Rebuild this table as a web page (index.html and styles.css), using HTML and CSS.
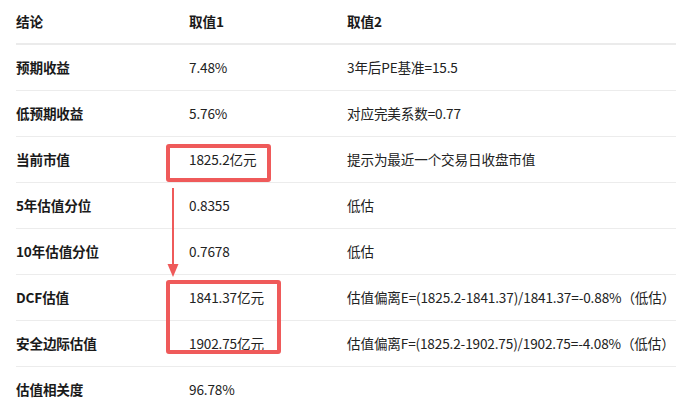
FILE: index.html
```html
<!DOCTYPE html>
<html lang="zh-CN">
<head>
<meta charset="utf-8">
<link rel="stylesheet" href="styles.css">
</head>
<body>
<div class="page">
  <div class="table">
    <div class="row head"><div class="c1">结论</div><div class="c2">取值1</div><div class="c3">取值2</div></div>
    <div class="row"><div class="c1">预期收益</div><div class="c2">7.48%</div><div class="c3">3年后PE基准=15.5</div></div>
    <div class="row"><div class="c1">低预期收益</div><div class="c2">5.76%</div><div class="c3">对应完美系数=0.77</div></div>
    <div class="row"><div class="c1">当前市值</div><div class="c2">1825.2亿元</div><div class="c3">提示为最近一个交易日收盘市值</div></div>
    <div class="row"><div class="c1">5年估值分位</div><div class="c2">0.8355</div><div class="c3">低估</div></div>
    <div class="row"><div class="c1">10年估值分位</div><div class="c2">0.7678</div><div class="c3">低估</div></div>
    <div class="row"><div class="c1">DCF估值</div><div class="c2">1841.37亿元</div><div class="c3">估值偏离E=(1825.2-1841.37)/1841.37=-0.88%（低估）</div></div>
    <div class="row"><div class="c1">安全边际估值</div><div class="c2">1902.75亿元</div><div class="c3">估值偏离F=(1825.2-1902.75)/1902.75=-4.08%（低估）</div></div>
    <div class="row last"><div class="c1">估值相关度</div><div class="c2">96.78%</div><div class="c3"></div></div>
  </div>
  <div class="mark mark-a"></div>
  <div class="mark mark-b"></div>
  <svg class="arrow" width="16" height="92" viewBox="0 0 16 92">
    <line x1="7" y1="0" x2="7" y2="80" stroke="#ef5a5a" stroke-width="2"/>
    <path d="M1.5 76 L12.5 76 L7 89 Z" fill="#ef5a5a"/>
  </svg>
</div>
</body>
</html>
```
FILE: styles.css
```css
html, body {
  margin: 0;
  padding: 0;
  background: #ffffff;
}
.page {
  position: relative;
  width: 676px;
  height: 401px;
  overflow: hidden;
  padding-left: 16px;
  box-sizing: border-box;
  font-family: "Noto Sans CJK SC", sans-serif;
  font-size: 13.6px;
  letter-spacing: -0.15px;
  color: #222222;
}
.table {
  display: flex;
  flex-direction: column;
}
.row {
  display: grid;
  grid-template-columns: 173px 158px 1fr;
  align-items: center;
  box-sizing: border-box;
  height: 46px;
  padding-bottom: 2px;
  border-bottom: 1px solid #ececec;
}
.row.head {
  height: 45px;
  border-bottom: 2px solid #ebebeb;
  font-weight: bold;
  color: #1a1a1a;
}
.row.last {
  border-bottom: none;
}
.c1 {
  font-weight: bold;
  color: #1a1a1a;
}
.c3 {
  white-space: nowrap;
}
.mark {
  position: absolute;
  border: 4px solid #ef5a5a;
  border-radius: 3px;
  box-sizing: border-box;
}
.mark-a {
  left: 166px;
  top: 144px;
  width: 105px;
  height: 38px;
}
.mark-b {
  left: 166px;
  top: 280px;
  width: 115px;
  height: 74px;
}
.arrow {
  position: absolute;
  left: 166px;
  top: 188px;
}
```
